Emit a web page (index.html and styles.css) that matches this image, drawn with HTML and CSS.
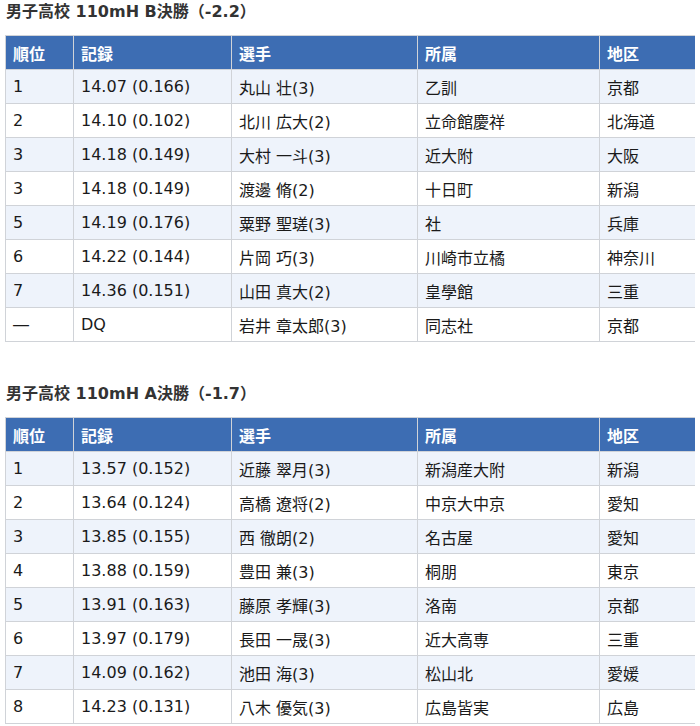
FILE: index.html
```html
<!DOCTYPE html>
<html lang="ja">
<head>
<meta charset="utf-8">
<link rel="stylesheet" href="styles.css">
</head>
<body>
<h3 class="title">男子高校 110mH B決勝（-2.2）</h3>
<table class="results">
<colgroup><col class="c1"><col class="c2"><col class="c3"><col class="c4"><col class="c5"></colgroup>
<thead><tr><th>順位</th><th>記録</th><th>選手</th><th>所属</th><th>地区</th></tr></thead>
<tbody>
<tr><td>1</td><td>14.07 (0.166)</td><td>丸山 壮(3)</td><td>乙訓</td><td>京都</td></tr>
<tr><td>2</td><td>14.10 (0.102)</td><td>北川 広大(2)</td><td>立命館慶祥</td><td>北海道</td></tr>
<tr><td>3</td><td>14.18 (0.149)</td><td>大村 一斗(3)</td><td>近大附</td><td>大阪</td></tr>
<tr><td>3</td><td>14.18 (0.149)</td><td>渡邊 脩(2)</td><td>十日町</td><td>新潟</td></tr>
<tr><td>5</td><td>14.19 (0.176)</td><td>粟野 聖瑳(3)</td><td>社</td><td>兵庫</td></tr>
<tr><td>6</td><td>14.22 (0.144)</td><td>片岡 巧(3)</td><td>川崎市立橘</td><td>神奈川</td></tr>
<tr><td>7</td><td>14.36 (0.151)</td><td>山田 真大(2)</td><td>皇學館</td><td>三重</td></tr>
<tr><td>―</td><td>DQ</td><td>岩井 章太郎(3)</td><td>同志社</td><td>京都</td></tr>
</tbody>
</table>
<h3 class="title second">男子高校 110mH A決勝（-1.7）</h3>
<table class="results">
<colgroup><col class="c1"><col class="c2"><col class="c3"><col class="c4"><col class="c5"></colgroup>
<thead><tr><th>順位</th><th>記録</th><th>選手</th><th>所属</th><th>地区</th></tr></thead>
<tbody>
<tr><td>1</td><td>13.57 (0.152)</td><td>近藤 翠月(3)</td><td>新潟産大附</td><td>新潟</td></tr>
<tr><td>2</td><td>13.64 (0.124)</td><td>高橋 遼将(2)</td><td>中京大中京</td><td>愛知</td></tr>
<tr><td>3</td><td>13.85 (0.155)</td><td>西 徹朗(2)</td><td>名古屋</td><td>愛知</td></tr>
<tr><td>4</td><td>13.88 (0.159)</td><td>豊田 兼(3)</td><td>桐朋</td><td>東京</td></tr>
<tr><td>5</td><td>13.91 (0.163)</td><td>藤原 孝輝(3)</td><td>洛南</td><td>京都</td></tr>
<tr><td>6</td><td>13.97 (0.179)</td><td>長田 一晟(3)</td><td>近大高専</td><td>三重</td></tr>
<tr><td>7</td><td>14.09 (0.162)</td><td>池田 海(3)</td><td>松山北</td><td>愛媛</td></tr>
<tr><td>8</td><td>14.23 (0.131)</td><td>八木 優気(3)</td><td>広島皆実</td><td>広島</td></tr>
</tbody>
</table>
</body>
</html>
```
FILE: styles.css
```css
body {
  margin: 0 5px;
  font-family: "DejaVu Sans", "Noto Sans CJK JP", sans-serif;
  color: #1a1a1a;
  background: #fff;
}
.title {
  margin: 0 0 11px;
  padding-left: 1px;
  font-size: 16px;
  line-height: 24px;
  font-weight: bold;
  color: #333;
}
.title.second {
  margin-top: 40px;
}
.results {
  width: 690px;
  table-layout: fixed;
  border-collapse: collapse;
  font-size: 16px;
}
.c1 { width: 68px; }
.c2 { width: 158px; }
.c3 { width: 186px; }
.c4 { width: 182px; }
.c5 { width: 96px; }
.results th,
.results td {
  height: 33px;
  padding: 0 7px;
  border: 1px solid #d0d3d8;
  text-align: left;
  vertical-align: middle;
  white-space: nowrap;
}
.results th {
  background: #3d6db3;
  color: #fff;
  font-weight: bold;
}
.results tbody tr:nth-child(odd) td {
  background: #eef3fb;
}
```
